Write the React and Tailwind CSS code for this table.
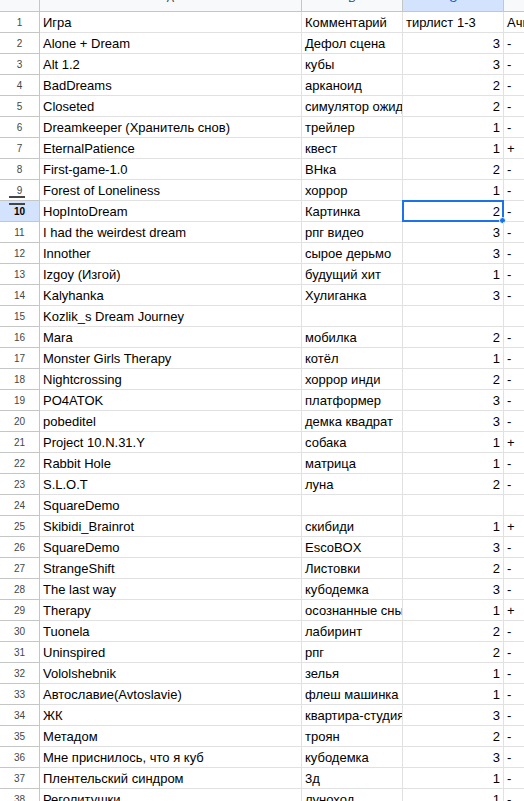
import React from "react";

const rows = [
  ["Игра", "Комментарий", "тирлист 1-3", "Ачивки", true],
  ["Alone + Dream", "Дефол сцена", "3", "-"],
  ["Alt 1.2", "кубы", "3", "-"],
  ["BadDreams", "арканоид", "2", "-"],
  ["Closeted", "симулятор ожидания", "2", "-"],
  ["Dreamkeeper (Хранитель снов)", "трейлер", "1", "-"],
  ["EternalPatience", "квест", "1", "+"],
  ["First-game-1.0", "ВНка", "2", "-"],
  ["Forest of Loneliness", "хоррор", "1", "-"],
  ["HopIntoDream", "Картинка", "2", "-"],
  ["I had the weirdest dream", "рпг видео", "3", "-"],
  ["Innother", "сырое дерьмо", "3", "-"],
  ["Izgoy (Изгой)", "будущий хит", "1", "-"],
  ["Kalyhanka", "Хулиганка", "3", "-"],
  ["Kozlik_s Dream Journey", "", "", ""],
  ["Mara", "мобилка", "2", "-"],
  ["Monster Girls Therapy", "котёл", "1", "-"],
  ["Nightcrossing", "хоррор инди", "2", "-"],
  ["PO4ATOK", "платформер", "3", "-"],
  ["pobeditel", "демка квадрат", "3", "-"],
  ["Project 10.N.31.Y", "собака", "1", "+"],
  ["Rabbit Hole", "матрица", "1", "-"],
  ["S.L.O.T", "луна", "2", "-"],
  ["SquareDemo", "", "", ""],
  ["Skibidi_Brainrot", "скибиди", "1", "+"],
  ["SquareDemo", "EscoBOX", "3", "-"],
  ["StrangeShift", "Листовки", "2", "-"],
  ["The last way", "кубодемка", "3", "-"],
  ["Therapy", "осознанные сны", "1", "+"],
  ["Tuonela", "лабиринт", "2", "-"],
  ["Uninspired", "рпг", "2", "-"],
  ["Vololshebnik", "зелья", "1", "-"],
  ["Автославие(Avtoslavie)", "флеш машинка", "1", "-"],
  ["ЖК", "квартира-студия", "3", "-"],
  ["Метадом", "троян", "2", "-"],
  ["Мне приснилось, что я куб", "кубодемка", "3", "-"],
  ["Плентельский синдром", "3д", "1", "-"],
  ["Реголитушки", "луноход", "1", "-"],
];

const cell = "h-[21px] pt-[2px] border-r border-b border-[#e1e1e1] flex items-center overflow-hidden whitespace-nowrap";

export default function App() {
  return (
    <div className="w-[524px] h-[801px] overflow-hidden bg-white text-black text-[13px]" style={{ fontFamily: '"Liberation Sans", Arial, sans-serif' }}>
      <div className="grid grid-cols-[40px_262px_101px_101px_120px]">
        {/* column headers, scrolled so only their bottom shows */}
        <div className="h-[12px] bg-[#f8f9fa] border-r border-b border-[#c4c7c5]" />
        {["A", "B", "C", "D"].map((l) => (
          <div
            key={l}
            className={
              "h-[12px] border-r border-b border-[#c4c7c5] flex justify-center overflow-hidden " +
              (l === "C" ? "bg-[#d3e3fd] text-[#0b57d0]" : "bg-[#f8f9fa] text-[#444746]")
            }
          >
            <span className="text-[11px] leading-[11px] -mt-[7px]">{l}</span>
          </div>
        ))}

        {rows.map((r, i) => {
          const n = i + 1;
          const sel = n === 10;
          return (
            <React.Fragment key={n}>
              <div
                className={
                  "relative h-[21px] pt-[1px] border-r border-b border-[#c4c7c5] flex items-center justify-center text-[10px] " +
                  (sel ? "bg-[#d3e3fd] text-black font-bold" : "bg-white text-[#444746]")
                }
              >
                {n}
                {n === 9 && <div className="absolute left-[9px] bottom-[2px] w-[16px] h-[2px] bg-[#444746]" />}
                {n === 10 && <div className="absolute left-[9px] top-[2px] w-[16px] h-[2px] bg-[#444746]" />}
              </div>
              <div className={cell + " pl-[3px]"}>{r[0]}</div>
              <div className={cell + " pl-[3px]"}>{r[1]}</div>
              <div className={cell + " relative overflow-visible " + (r[4] ? "pl-[3px]" : "justify-end pr-[3px]")}>
                {r[2]}
                {sel && (
                  <div className="absolute -left-px -top-px w-[102px] h-[22px] border-2 border-[#1a73e8] pointer-events-none">
                    <div className="absolute -right-[4px] -bottom-[4px] w-[7px] h-[7px] rounded-full bg-[#1a73e8] border border-white" />
                  </div>
                )}
              </div>
              <div className={cell + " pl-[3px]"}>{r[3]}</div>
            </React.Fragment>
          );
        })}
      </div>
    </div>
  );
}
